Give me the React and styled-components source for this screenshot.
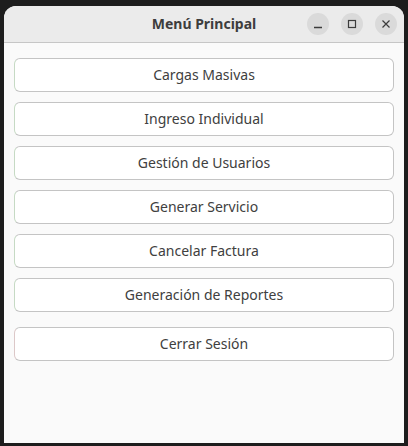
import React from "react";
import styled, { createGlobalStyle, css } from "styled-components";

const GlobalStyle = createGlobalStyle`
  html, body {
    margin: 0;
    padding: 0;
    background: #1d1d1d;
  }
  body {
    font-family: "Noto Sans", "DejaVu Sans", sans-serif;
  }
`;

const menuItems = [
  "Cargas Masivas",
  "Ingreso Individual",
  "Gestión de Usuarios",
  "Generar Servicio",
  "Cancelar Factura",
  "Generación de Reportes",
];

function App() {
  return (
    <>
      <GlobalStyle />
      <Screen>
        <Window>
          <TitleBar>
            <Title>Menú Principal</Title>
            <Controls>
              <ControlButton aria-label="minimizar">
                <svg width="10" height="10" viewBox="0 0 10 10">
                  <path d="M1 8.5h8" stroke="#3c3c3c" strokeWidth="1.4" />
                </svg>
              </ControlButton>
              <ControlButton aria-label="maximizar">
                <svg width="10" height="10" viewBox="0 0 10 10">
                  <rect x="1.5" y="1.5" width="7" height="7" fill="none" stroke="#3c3c3c" strokeWidth="1.2" />
                </svg>
              </ControlButton>
              <ControlButton aria-label="cerrar">
                <svg width="10" height="10" viewBox="0 0 10 10">
                  <path d="M1.5 1.5l7 7M8.5 1.5l-7 7" stroke="#3c3c3c" strokeWidth="1.2" />
                </svg>
              </ControlButton>
            </Controls>
          </TitleBar>
          <Body>
            {menuItems.map((item) => (
              <MenuButton key={item}>{item}</MenuButton>
            ))}
            <MenuButton danger>Cerrar Sesión</MenuButton>
          </Body>
        </Window>
      </Screen>
    </>
  );
}

export default App;

const Screen = styled.div`
  width: 408px;
  height: 446px;
  padding: 6px 4px 3px 4px;
  box-sizing: border-box;
  display: flex;
`;

const Window = styled.div`
  flex: 1;
  display: flex;
  flex-direction: column;
  background: #fafafa;
  border-radius: 12px 12px 0 0;
  overflow: hidden;
`;

const TitleBar = styled.div`
  position: relative;
  height: 36px;
  flex-shrink: 0;
  display: flex;
  align-items: center;
  justify-content: center;
  background: #ebebeb;
  border-bottom: 1px solid #c6c6c6;
`;

const Title = styled.div`
  font-size: 14px;
  font-weight: 700;
  color: #3d3d3d;
  padding-bottom: 1px;
`;

const Controls = styled.div`
  position: absolute;
  right: 7px;
  top: 7px;
  display: flex;
  gap: 12px;
`;

const ControlButton = styled.div`
  width: 22px;
  height: 22px;
  border-radius: 50%;
  background: #dadada;
  display: flex;
  align-items: center;
  justify-content: center;
`;

const Body = styled.div`
  display: flex;
  flex-direction: column;
  gap: 10px;
  padding: 15px 10px 0 10px;
`;

const MenuButton = styled.div`
  height: 34px;
  box-sizing: border-box;
  display: flex;
  align-items: center;
  justify-content: center;
  padding-bottom: 2px;
  background: #ffffff;
  border: 1px solid #c4c4c4;
  border-left-color: #c6dac4;
  border-radius: 6px;
  font-size: 14px;
  color: #404040;

  ${(p) =>
    p.danger &&
    css`
      margin-top: 5px;
      border-left-color: #dcc8c8;
    `}
`;
